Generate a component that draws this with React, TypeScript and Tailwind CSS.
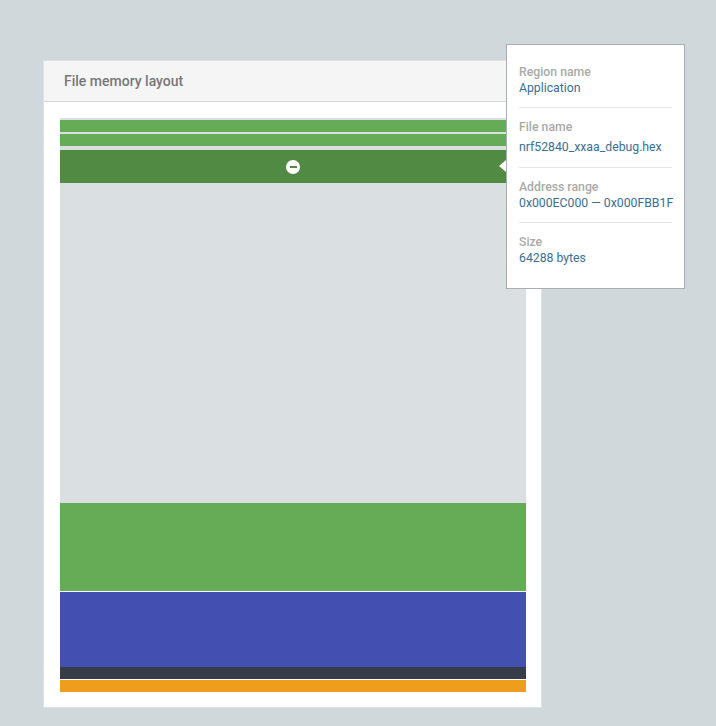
import React from "react";

const rows = [
  { label: "Region name", value: "Application", extra: false },
  { label: "File name", value: "nrf52840_xxaa_debug.hex", extra: true },
  { label: "Address range", value: "0x000EC000 \u2014 0x000FBB1F", extra: false },
  { label: "Size", value: "64288 bytes", extra: false },
];

export default function App() {
  return (
    <div
      className="relative w-[716px] h-[726px] bg-[#d1d8db] overflow-hidden"
      style={{ fontFamily: "Roboto, 'Liberation Sans', sans-serif" }}
    >
      <div className="absolute left-0 top-0 w-full h-full flex">
        <div className="ml-[43px] mt-[60px] w-[499px] h-[648px] bg-white border border-[#dfe2e4] flex flex-col">
          <div className="h-[41px] shrink-0 bg-[#f5f5f5] border-b border-[#d9d9d9] flex items-center px-5">
            <span className="text-[14px] font-medium text-[#777777]">File memory layout</span>
          </div>
          <div className="pt-4 pl-4 pr-[15px]">
            <div className="flex flex-col h-[574px]">
              <div className="flex flex-col h-[385px] shrink-0 bg-[#dadfe2] pt-[2px] gap-[2px]">
                <div className="h-[12px] bg-[#66ac57]" />
                <div className="h-[12px] bg-[#66ac57]" />
                <div className="mt-[2px] h-[33px] bg-[#518a42] flex items-center justify-center">
                  <div className="w-[14px] h-[14px] rounded-full bg-white flex items-center justify-center">
                    <div className="w-[7px] h-[2px] bg-[#518a42]" />
                  </div>
                </div>
              </div>
              <div className="h-[88px] shrink-0 bg-[#66ac57]" />
              <div className="h-px shrink-0 bg-white" />
              <div className="h-[75px] shrink-0 bg-[#444fb2]" />
              <div className="h-[12px] shrink-0 bg-[#363d48]" />
              <div className="h-px shrink-0 bg-white" />
              <div className="h-[12px] shrink-0 bg-[#ef9d1c]" />
            </div>
          </div>
        </div>
      </div>

      <div className="absolute left-[506px] top-[44px] w-[179px] bg-white border border-[#a9aeb1] px-3 pt-2 pb-[11px]">
        <div className="absolute left-[-8px] top-[115px] w-0 h-0 border-y-[6px] border-y-transparent border-r-[7px] border-r-white" />
        {rows.map((r, i) => (
          <div
            key={r.label}
            className={
              (i > 0 ? "border-t border-[#e6e6e6] " : "") +
              (r.extra ? "pt-[11px] pb-[12px]" : "py-[11px]")
            }
          >
            <div className="text-[12.25px] leading-[16px] font-medium text-[#aaaaaa] whitespace-nowrap">
              {r.label}
            </div>
            <div
              className={
                "text-[12.25px] leading-[16px] text-[#3b6e96] whitespace-nowrap" +
                (r.extra ? " mt-1" : "")
              }
            >
              {r.value}
            </div>
          </div>
        ))}
      </div>
    </div>
  );
}
